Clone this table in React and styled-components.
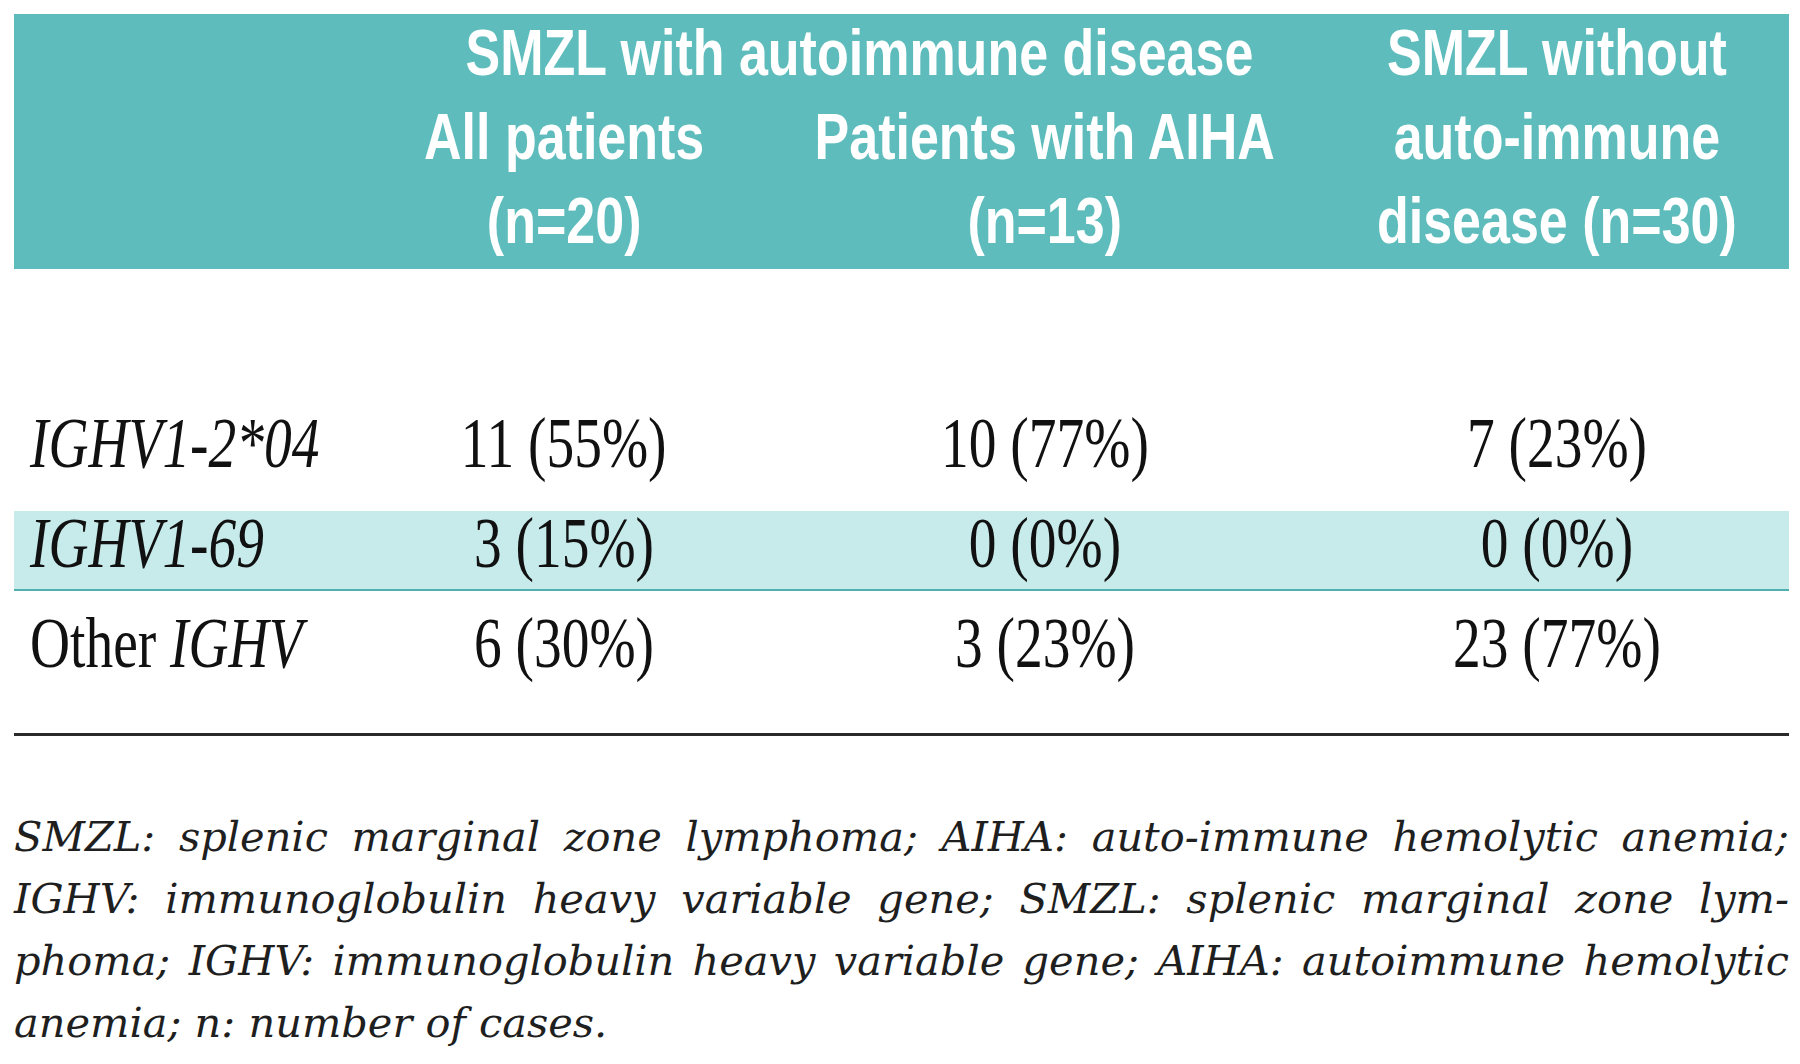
import React from "react";
import styled, { createGlobalStyle } from "styled-components";

const GlobalStyle = createGlobalStyle`
  html, body {
    margin: 0;
    padding: 0;
    background: #ffffff;
  }
  body {
    width: 1800px;
    height: 1064px;
    overflow: hidden;
  }
`;

const COLS = "364px 372px 590px 434px";

const Page = styled.div`
  display: flex;
  flex-direction: column;
  padding: 14px 11px 0 14px;
  width: 1775px;
`;

const HeaderBand = styled.div`
  display: grid;
  grid-template-columns: ${COLS};
  grid-template-rows: 84px 84px 84px;
  padding-bottom: 3px;
  background: #5ebdbc;
  color: #ffffff;
  font-family: "Liberation Sans", Arial, sans-serif;
  font-weight: 700;
  font-size: 65px;
  line-height: 84px;
`;

const HeadCell = styled.div`
  grid-column: ${(p) => p.$col};
  grid-row: ${(p) => p.$row};
  display: flex;
  justify-content: center;
  align-items: flex-start;
  margin-top: -3px;
  text-align: center;
  white-space: nowrap;
  min-width: 0;
`;

const Squeeze = styled.span`
  display: inline-block;
  flex: none;
  transform: scaleX(${(p) => p.$x});
  transform-origin: ${(p) => (p.$left ? "left center" : "center center")};
`;

const Body = styled.div`
  display: flex;
  flex-direction: column;
  gap: 20px;
  padding-top: 142px;
`;

const Row = styled.div`
  display: grid;
  grid-template-columns: ${COLS};
  height: ${(p) => (p.$shaded ? "78px" : "80px")};
  background: ${(p) => (p.$shaded ? "#c7ebeb" : "transparent")};
  border-bottom: ${(p) => (p.$shaded ? "2px solid #4fb0af" : "none")};
  font-family: "Liberation Serif", "Times New Roman", serif;
  font-size: 72px;
  line-height: 64px;
  color: #111111;
`;

const LabelCell = styled.div`
  padding-left: 16px;
  white-space: nowrap;
`;

const ValueCell = styled.div`
  display: flex;
  justify-content: center;
  white-space: nowrap;
  min-width: 0;
`;

const Gene = styled.i`
  font-style: italic;
`;

const Rule = styled.div`
  margin-top: 42px;
  height: 3px;
  background: #2a2a2a;
`;

const Footnote = styled.div`
  margin-top: 70px;
  font-family: "DejaVu Serif", "Liberation Serif", serif;
  font-style: italic;
  font-size: 41.5px;
  line-height: 62px;
  letter-spacing: 0;
  color: #1f1f1f;
`;

const NoteLine = styled.div`
  text-align: justify;
  text-align-last: ${(p) => (p.$last ? "left" : "justify")};
`;

const rows = [
  { label: <Gene>IGHV1-2*04</Gene>, v: ["11 (55%)", "10 (77%)", "7 (23%)"] },
  { label: <Gene>IGHV1-69</Gene>, v: ["3 (15%)", "0 (0%)", "0 (0%)"], shaded: true },
  {
    label: (
      <>
        Other <Gene>IGHV</Gene>
      </>
    ),
    v: ["6 (30%)", "3 (23%)", "23 (77%)"],
  },
];

const notes = [
  "SMZL: splenic marginal zone lymphoma; AIHA: auto-immune hemolytic anemia;",
  "IGHV: immunoglobulin heavy variable gene; SMZL: splenic marginal zone lym-",
  "phoma; IGHV: immunoglobulin heavy variable gene; AIHA: autoimmune hemolytic",
  "anemia; n: number of cases.",
];

export default function App() {
  return (
    <>
      <GlobalStyle />
      <Page>
        <HeaderBand>
          <HeadCell $col="2 / 4" $row="1">
            <Squeeze $x={0.8}>SMZL with autoimmune disease</Squeeze>
          </HeadCell>
          <HeadCell $col="2" $row="2 / 4">
            <Squeeze $x={0.8}>
              All patients
              <br />
              (n=20)
            </Squeeze>
          </HeadCell>
          <HeadCell $col="3" $row="2 / 4">
            <Squeeze $x={0.8}>
              Patients with AIHA
              <br />
              (n=13)
            </Squeeze>
          </HeadCell>
          <HeadCell $col="4" $row="1 / 4">
            <Squeeze $x={0.8}>
              SMZL without
              <br />
              auto-immune
              <br />
              disease (n=30)
            </Squeeze>
          </HeadCell>
        </HeaderBand>
        <Body>
          {rows.map((r, i) => (
            <Row key={i} $shaded={r.shaded}>
              <LabelCell>
                <Squeeze $x={0.77} $left>
                  {r.label}
                </Squeeze>
              </LabelCell>
              {r.v.map((val, j) => (
                <ValueCell key={j}>
                  <Squeeze $x={0.77}>{val}</Squeeze>
                </ValueCell>
              ))}
            </Row>
          ))}
        </Body>
        <Rule />
        <Footnote>
          {notes.map((n, i) => (
            <NoteLine key={i} $last={i === notes.length - 1}>
              {n}
            </NoteLine>
          ))}
        </Footnote>
      </Page>
    </>
  );
}
